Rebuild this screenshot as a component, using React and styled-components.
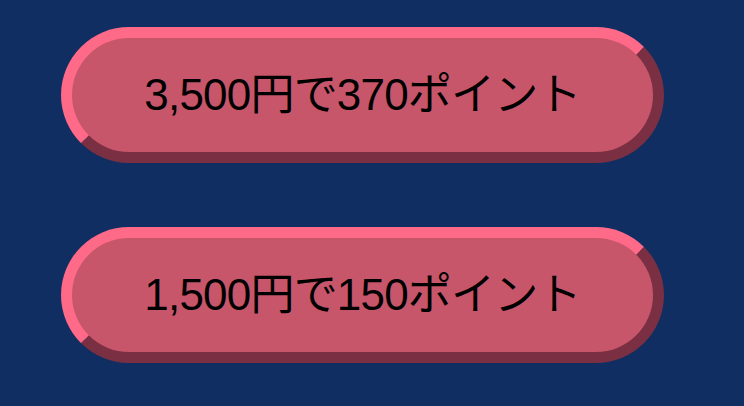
import React from 'react';
import styled, { createGlobalStyle } from 'styled-components';

const GlobalStyle = createGlobalStyle`
	html, body {
		margin: 0;
		padding: 0;
		background-color: #102e61;
	}
	body {
		font-family: "Liberation Sans", "Noto Sans CJK JP", sans-serif;
	}
`;

const Page = styled.div`
	width: 744px;
	height: 406px;
	box-sizing: border-box;
	padding: 27px 0 0 61px;
	
	display: flex;
	flex-direction: column;
	gap: 64px;
	
	background-color: #102e61;
	overflow: hidden;
`;

const PointButton = styled.button`
	width: 603px;
	height: 136px;
	box-sizing: border-box;
	padding: 0;
	
	display: flex;
	align-items: center;
	justify-content: center;
	
	border-radius: 68px;
	border-style: solid;
	border-width: 11px;
	border-color: #ff6a88 #7a2f43 #7a2f43 #ff6a88;
	background-color: #c8566b;
	
	color: #000;
	font-family: "Liberation Sans", "Noto Sans CJK JP", sans-serif;
	font-size: 44px;
	line-height: 1;
	letter-spacing: -0.8px;
	
	&:hover { cursor: pointer; }
`;

const plans = [
	{ price: '3,500', points: '370' },
	{ price: '1,500', points: '150' },
];

export default function App() {
	return (
		<>
			<GlobalStyle />
			<Page>
				{plans.map((p) => (
					<PointButton key={p.price}>
						{p.price}円で{p.points}ポイント
					</PointButton>
				))}
			</Page>
		</>
	);
}
